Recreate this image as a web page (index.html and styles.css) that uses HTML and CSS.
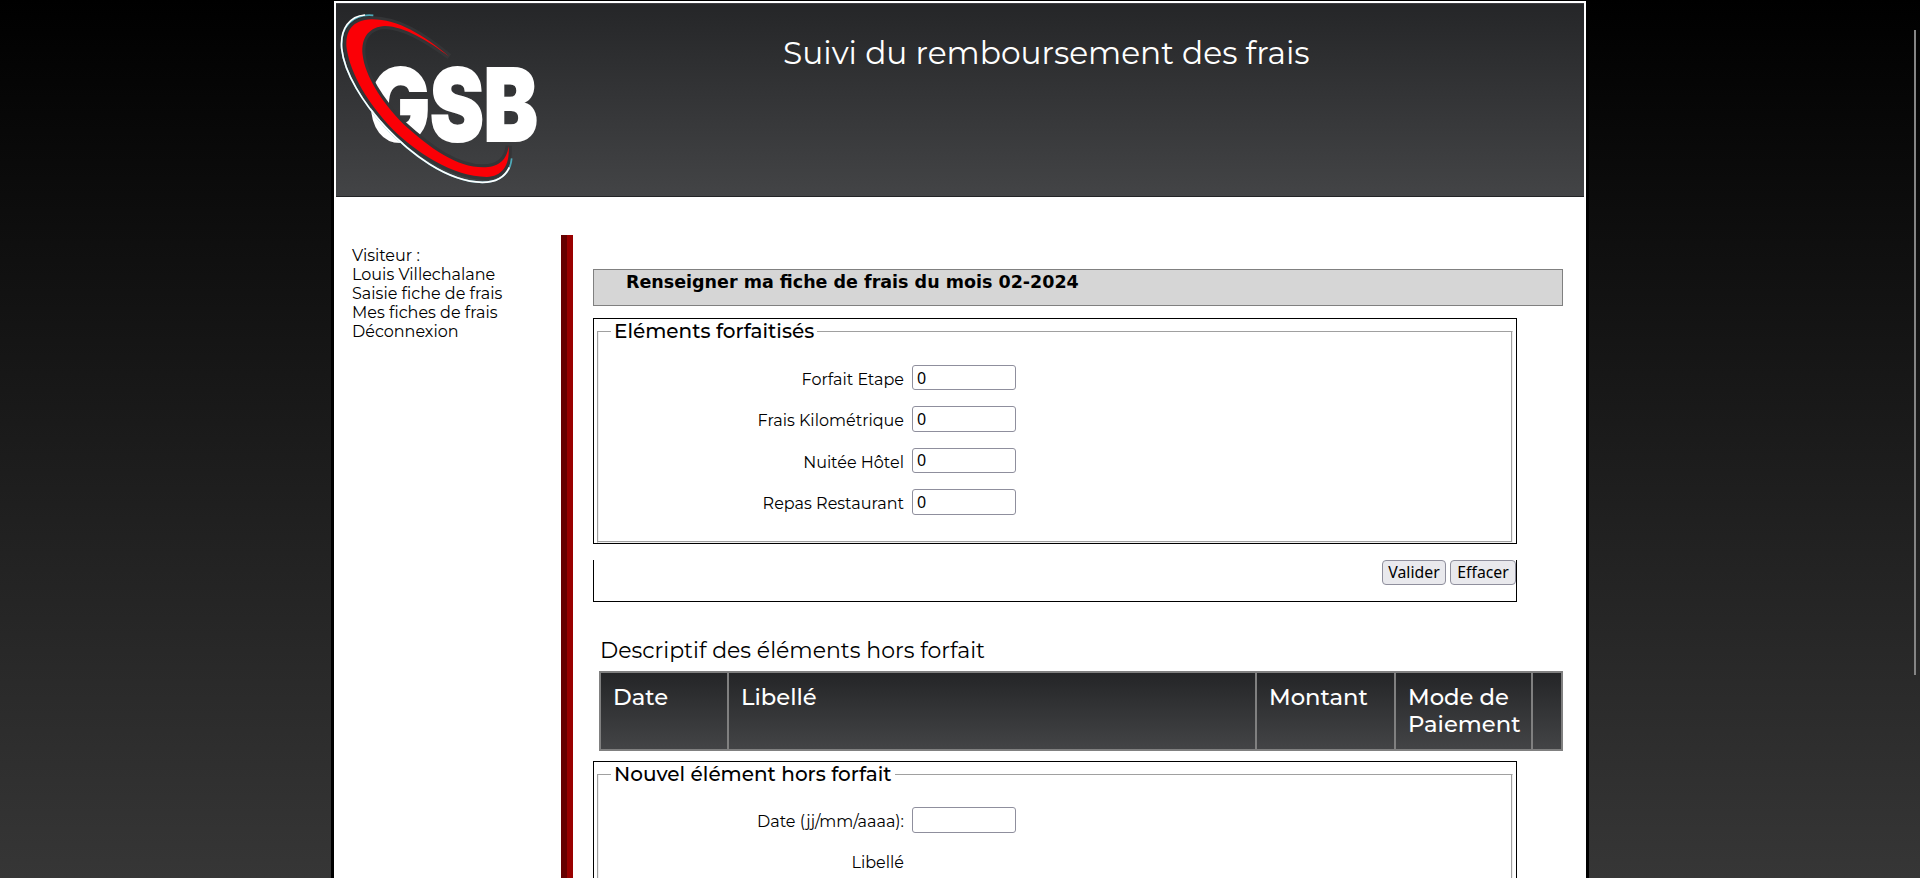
FILE: index.html
```html
<!DOCTYPE html>
<html lang="fr">
<head>
<meta charset="utf-8">
<title>Suivi du remboursement des frais</title>
<link rel="stylesheet" href="styles.css">
</head>
<body>
<div class="page">
  <header class="header">
    <svg class="logo" viewBox="48 9 612 582" role="img" aria-label="GSB">
      <text class="logo-text" x="147" y="423" textLength="506" lengthAdjust="spacingAndGlyphs">GSB</text>
      <path class="logo-gap" d="M243 276H335V297H243Z"/>
      <path class="logo-shade" d="M388 170C310 105 235 58 155 58C95 60 75 95 80 145C92 225 145 310 215 385C290 460 400 530 500 531C545 529 570 500 566 438C560 485 530 502 490 502C410 502 330 445 250 372C180 300 135 225 128 165C122 110 150 80 195 78C255 80 325 123 388 170Z"/>
      <path class="logo-arc-edge" d="M160 46C100 40 60 80 65 145C73 220 130 310 195 380C270 460 380 545 487 547C545 547 572 515 575 475"/>
      <path class="logo-arc" d="M135 45C90 48 60 85 65 145C73 220 130 310 195 380C270 460 380 545 487 547C530 547 556 528 568 502"/>
      <path class="logo-swoosh" d="M388 170C310 105 235 58 155 58C95 60 75 95 80 145C92 225 145 310 215 385C290 460 400 530 500 531C545 529 570 500 566 438C560 485 530 502 490 502C410 502 330 445 250 372C180 300 135 225 128 165C122 110 150 80 195 78C255 80 325 123 388 170Z"/>
    </svg>
    <h1 class="title">Suivi du remboursement des frais</h1>
  </header>
  <div class="columns">
    <nav class="menu">
      <ul class="menu-list">
        <li>Visiteur :</li>
        <li>Louis Villechalane</li>
        <li>Saisie fiche de frais</li>
        <li>Mes fiches de frais</li>
        <li>Déconnexion</li>
      </ul>
    </nav>
    <main class="content">
      <h2 class="banner">Renseigner ma fiche de frais du mois 02-2024</h2>
      <form class="form">
        <div class="frame frame-fixed">
          <fieldset class="group">
            <legend class="legend">Eléments forfaitisés</legend>
            <div class="row"><label class="label" for="etp">Forfait Etape</label><input class="input" id="etp" type="text" value="0"></div>
            <div class="row"><label class="label" for="km">Frais Kilométrique</label><input class="input input-tall" id="km" type="text" value="0"></div>
            <div class="row"><label class="label" for="nui">Nuitée Hôtel</label><input class="input" id="nui" type="text" value="0"></div>
            <div class="row"><label class="label" for="rep">Repas Restaurant</label><input class="input input-tall" id="rep" type="text" value="0"></div>
          </fieldset>
        </div>
        <div class="actions">
          <button class="button" type="button">Valider</button>
          <button class="button button-wide" type="button">Effacer</button>
        </div>
      </form>
      <div class="table-title">Descriptif des éléments hors forfait</div>
      <div class="table">
        <div class="cell">Date</div>
        <div class="cell">Libellé</div>
        <div class="cell">Montant</div>
        <div class="cell">Mode de<br>Paiement</div>
        <div class="cell"></div>
      </div>
      <div class="frame frame-new">
        <fieldset class="group">
          <legend class="legend">Nouvel élément hors forfait</legend>
          <div class="row"><label class="label" for="dt">Date (jj/mm/aaaa):</label><input class="input input-tall" id="dt" type="text"></div>
          <div class="row"><span class="label">Libellé</span></div>
        </fieldset>
      </div>
    </main>
  </div>
</div>
<div class="scroll-thumb"></div>
</body>
</html>
```
FILE: styles.css
```css
* {
  box-sizing: border-box;
}

html {
  height: 100%;
  overflow: hidden;
}

body {
  height: 878px;
  margin: 0;
  overflow: hidden;
  background: linear-gradient(#000, #363636);
  color: #000;
  font-family: Montserrat, Inter, sans-serif;
  font-size: 16px;
}

.page {
  display: flex;
  flex-direction: column;
  width: 1258px;
  height: 878px;
  margin: 0 auto;
  padding: 2px 2px 0;
  border: 3px solid #000;
  border-top-width: 1px;
  border-bottom: 0;
  background: #fff;
  overflow: hidden;
}

.header {
  display: flex;
  flex: none;
  height: 194px;
  border-top: 1px solid #3f3e42;
  border-bottom: 1px solid #232426;
  background: linear-gradient(#252628, #434446);
}

.logo {
  flex: none;
  width: 204px;
  height: 194px;
  margin-top: -1px;
}

.logo-text {
  fill: #fff;
  stroke: #fff;
  stroke-width: 6px;
  font-family: Inter, sans-serif;
  font-size: 301px;
  font-weight: 900;
}

.logo-gap {
  fill: #323335;
}

.logo-shade {
  fill: #343537;
  stroke: #343537;
  stroke-width: 18px;
}

.logo-swoosh {
  fill: #fb0006;
}

.logo-arc,
.logo-arc-edge {
  fill: none;
  stroke: #fff;
  stroke-width: 5px;
}

.logo-arc-edge {
  stroke: #4fa9b8;
}

.title {
  margin: 27px 0 0 243px;
  color: #fff;
  font-size: 31.25px;
  font-weight: 400;
  line-height: 44px;
  white-space: nowrap;
}

.columns {
  display: flex;
  flex: 1;
  min-height: 0;
  padding-top: 38px;
}

.menu {
  width: 237px;
  padding: 11px 12px 0 16px;
  background: linear-gradient(90deg, #600 50%, #900 50%) right / 12px 100% no-repeat;
}

.menu-list {
  margin: 0;
  padding: 0;
  list-style: none;
  line-height: 19px;
}

.content {
  width: 990px;
  padding: 34px 0 0 20px;
}

.banner {
  height: 37px;
  width: 970px;
  margin: 0;
  padding-left: 32px;
  border: 1px solid #808080;
  background: #d6d6d6;
  font-family: Verdana, "DejaVu Sans", sans-serif;
  font-size: 17.5px;
  font-weight: 700;
  line-height: 24px;
  white-space: nowrap;
}

.form {
  width: 924px;
  margin-top: 12px;
}

.frame {
  width: 924px;
  height: 226px;
  padding: 1px 3px 0;
  border: 1px solid #000;
}

.group {
  height: 223px;
  min-width: 0;
  margin: 0;
  padding: 0 0 0 13px;
  border: 1px solid;
  border-color: #a0a0a0 #f0f0f0 #f0f0f0 #a0a0a0;
  box-shadow: inset -1px -1px #a0a0a0, inset 1px 0 #f0f0f0;
}

.legend {
  padding: 0 3px;
  font-size: 20px;
  font-weight: 500;
  line-height: 22px;
}

.row {
  display: flex;
  gap: 8px;
  height: 26px;
  margin-bottom: 15.4px;
}

.legend + .row {
  margin-top: 22px;
}

.frame-fixed .legend + .row {
  margin-top: 23px;
}

.label {
  width: 293px;
  line-height: 30px;
  text-align: right;
}

.input {
  width: 104px;
  height: 25px;
  padding: 0 4px;
  border: 1px solid #8f8f9d;
  border-radius: 3px;
  background: #fff;
  color: #000;
  font-family: "Noto Sans", sans-serif;
  font-size: 16px;
}

.input-tall {
  height: 26px;
}

.actions {
  display: flex;
  justify-content: flex-end;
  gap: 4px;
  height: 42px;
  margin-top: 16px;
  border: 1px solid #000;
  border-top: 0;
}

.button {
  width: 64px;
  height: 25px;
  padding: 0;
  border: 1px solid #8f8f9d;
  border-radius: 4px;
  background: #e9e9ed;
  color: #000;
  font-family: "Noto Sans", sans-serif;
  font-size: 15.8px;
  line-height: 23px;
}

.button-wide {
  width: 66px;
}

.table-title {
  margin: 35px 0 0 7px;
  font-size: 22px;
  line-height: 28px;
}

.table {
  display: grid;
  grid-template-columns: 126px 526px 137px 135px 28px;
  gap: 2px;
  width: 964px;
  height: 80px;
  margin: 6px 0 0 6px;
  border: 2px solid #808080;
  background: #808080;
}

.cell {
  padding: 11px 0 0 12px;
  background: linear-gradient(#242527, #434446);
  color: #fff;
  font-size: 22.7px;
  font-weight: 500;
  line-height: 27px;
  white-space: nowrap;
}

.frame-new {
  margin-top: 10px;
}

.scroll-thumb {
  position: absolute;
  top: 30px;
  right: 4px;
  width: 2px;
  height: 645px;
  background: #858585;
}
```
